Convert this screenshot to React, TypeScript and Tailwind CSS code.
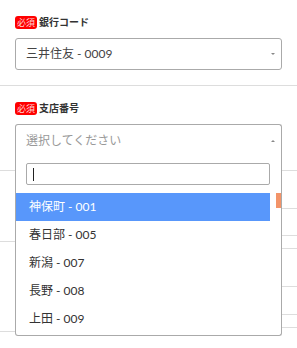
const font = { fontFamily: '"Lato", "Noto Sans CJK JP", sans-serif' };

const branches = ["神保町 - 001", "春日部 - 005", "新潟 - 007", "長野 - 008", "上田 - 009"];

const Required = ({ label }: { label: string }) => (
	<div className="flex items-center gap-[2px] h-[13px]">
		<span className="h-[13px] px-[2px] rounded-[3px] bg-[#ff0000] text-[#ffd6d6] text-[9px] leading-[13px] flex items-center">
			必須
		</span>
		<span className="text-[10px] font-bold text-[#333]">{label}</span>
	</div>
);

export default function App() {
	return (
		<div className="w-full min-h-[348px] bg-white" style={font}>
			<div className="px-[15px] pt-4 pb-[15px] border-b border-[#dddddd]">
				<Required label="銀行コード" />
				<div className="mt-[9px] h-8 border border-[#aaa] rounded-[3px] flex items-center pl-[10px] pr-[6px]">
					<span className="flex-1 text-[12px] text-[#444]">三井住友 - 0009</span>
					<span className="border-x-[2px] border-x-transparent border-t-[2px] border-t-[#888]" />
				</div>
			</div>

			<div className="px-[15px] pt-4 pb-[14px] border-b border-[#dddddd]">
				<Required label="支店番号" />
				<div className="relative mt-[9px]">
					<div className="h-8 border-x border-t border-[#aaa] rounded-t-[3px] flex items-center pl-[10px] pr-[6px]">
						<span className="flex-1 text-[12px] text-[#999]">選択してください</span>
						<span className="border-x-[2px] border-x-transparent border-b-[2px] border-b-[#888]" />
					</div>
					<div className="absolute z-10 top-full left-0 right-0 bg-white border-x border-b border-[#aaa] rounded-b-[3px]">
						<div className="pt-[7px] pb-[8px] pl-[10px] pr-[11px]">
							<div className="h-[22px] border border-[#aaa] rounded-[2px] flex items-center pl-[6px]">
								<span className="w-px h-[13px] bg-[#222]" />
							</div>
						</div>
						<div className="flex pb-[2px]">
							<div className="flex-1">
								{branches.map((b, i) => (
									<div
										key={b}
										className={`h-[28px] flex items-center pl-[13px] text-[12px] ${
											i === 0 ? "bg-[#5897fb] text-white" : "text-[#333]"
										}`}
									>
										{b}
									</div>
								))}
							</div>
							<div className="w-[11px] flex justify-end">
								<div className="w-[5px] h-[15px] bg-[#f39469]" />
							</div>
						</div>
					</div>
				</div>
			</div>

			<div className="flex">
				<div className="w-[15px]">
					<div className="h-[71px] border-b border-[#dddddd]" />
					<div className="h-[90px] border-b border-[#dddddd]" />
				</div>
				<div className="flex-1" />
				<div className="w-[15px]">
					<div className="h-[38px] border-b border-[#dddddd]" />
					<div className="h-[27px] border-b border-[#dddddd]" />
					<div className="h-[13px] border-b border-[#dddddd]" />
					<div className="h-[38px] border-b border-[#dddddd]" />
					<div className="h-[28px] border-b border-[#dddddd]" />
					<div className="h-[13px] border-b border-[#dddddd]" />
				</div>
			</div>
		</div>
	);
}
